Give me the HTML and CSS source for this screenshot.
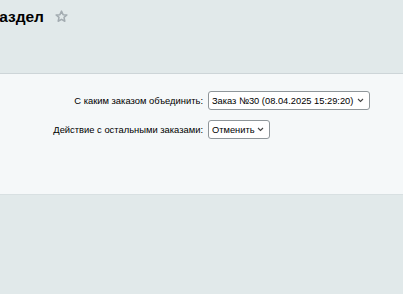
FILE: index.html
```html
<!DOCTYPE html>
<html lang="ru">
<head>
<meta charset="utf-8">
<link rel="stylesheet" href="styles.css">
</head>
<body>
<div class="header">
  <h1 class="title">Раздел</h1>
  <svg class="star" width="13" height="13" viewBox="0 0 14 14"><path d="M7 1.2 L8.7 5 L12.8 5.3 L9.7 8 L10.6 12.1 L7 10 L3.4 12.1 L4.3 8 L1.2 5.3 L5.3 5 Z" fill="none" stroke="#a3acb1" stroke-width="1.6" stroke-linejoin="round"/></svg>
</div>
<div class="panel">
  <div class="form">
    <div class="row">
      <label class="label">С каким заказом объединить:</label>
      <select class="sel sel-wide"><option>Заказ №30 (08.04.2025 15:29:20)</option></select>
    </div>
    <div class="row">
      <label class="label">Действие с остальными заказами:</label>
      <select class="sel sel-narrow"><option>Отменить</option></select>
    </div>
  </div>
</div>
</body>
</html>
```
FILE: styles.css
```css
html, body {
  margin: 0;
  padding: 0;
  background: #e1e9ea;
  font-family: "Liberation Sans", Arial, sans-serif;
  overflow: hidden;
  width: 403px;
  height: 294px;
}
.header {
  display: flex;
  align-items: center;
  height: 33px;
  margin-left: -11px;
}
.title {
  margin: 0;
  font-size: 15.5px;
  font-weight: bold;
  color: #000;
  line-height: 33px;
}
.star {
  margin-left: 11px;
  margin-top: -1px;
}
.panel {
  margin-top: 40px;
  height: 120px;
  background: #f5f8f9;
  border-top: 1px solid #cdd5d8;
  border-bottom: 1px solid #d8e0e2;
}
.form {
  display: flex;
  flex-direction: column;
  gap: 10px;
  padding-top: 17px;
}
.row {
  display: flex;
  align-items: center;
}
.label {
  width: 208px;
  text-align: right;
  font-size: 9.4px;
  color: #000;
  padding-right: 5px;
  box-sizing: border-box;
  white-space: nowrap;
}
.sel {
  -webkit-appearance: none;
  appearance: none;
  box-sizing: border-box;
  font-family: "Liberation Sans", Arial, sans-serif;
  font-size: 9.3px;
  height: 19px;
  margin: 0;
  padding: 0 12px 0 3px;
  color: #000;
  background: #fff url("data:image/svg+xml;utf8,<svg xmlns='http://www.w3.org/2000/svg' width='7' height='5' viewBox='0 0 7 5'><path d='M1 1 L3.5 3.5 L6 1' fill='none' stroke='%23444' stroke-width='1.1'/></svg>") no-repeat right 5px center;
  border: 1px solid #8f969a;
  border-radius: 3px;
}
.sel-wide { width: 162px; }
.sel-narrow { width: 62px; }
```
